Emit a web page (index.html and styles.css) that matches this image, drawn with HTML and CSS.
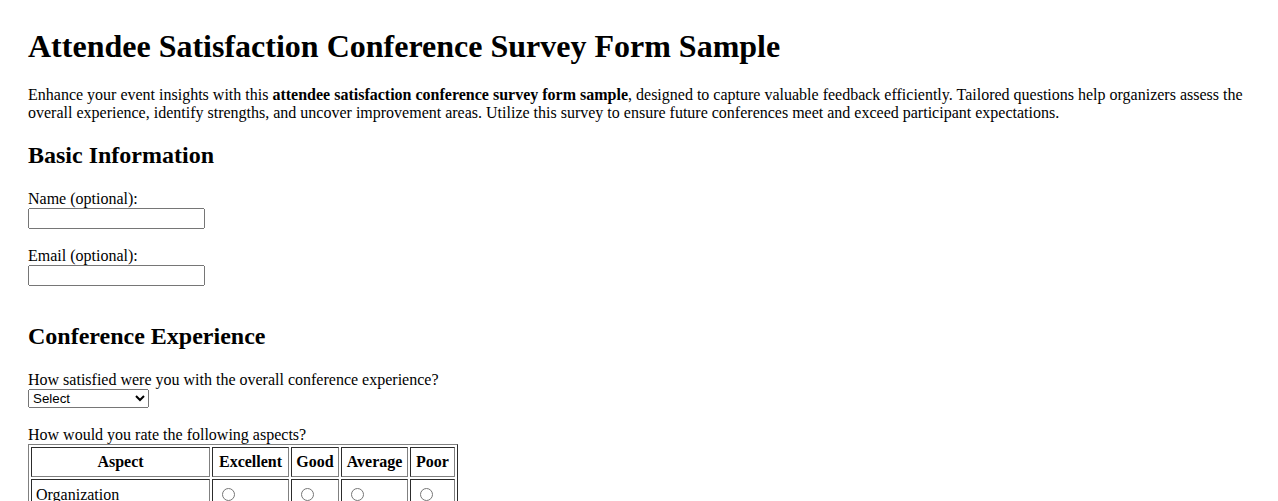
FILE: index.html
```html
<!DOCTYPE html>
<html lang="en">
<head>
<meta charset="utf-8">
<title>Attendee Satisfaction Conference Survey Form Sample</title>
<link rel="stylesheet" href="styles.css">
</head>
<body>
<div class="page">
  <h1 class="title">Attendee Satisfaction Conference Survey Form Sample</h1>
  <p class="intro">Enhance your event insights with this <strong>attendee satisfaction conference survey form sample</strong>, designed to capture valuable feedback efficiently. Tailored questions help organizers assess the overall experience, identify strengths, and uncover improvement areas. Utilize this survey to ensure future conferences meet and exceed participant expectations.</p>
  <form class="survey">
    <section class="section">
      <h2 class="section-title">Basic Information</h2>
      <p class="field"><label for="name">Name (optional):</label><br><input class="text-input" type="text" id="name" name="name"></p>
      <p class="field"><label for="email">Email (optional):</label><br><input class="text-input" type="email" id="email" name="email"></p>
    </section>
    <section class="section">
      <h2 class="section-title">Conference Experience</h2>
      <p class="field"><label for="overall">How satisfied were you with the overall conference experience?</label><br><select class="select-input" id="overall" name="overall">
          <option>Select</option>
          <option>Very Satisfied</option>
          <option>Satisfied</option>
          <option>Neutral</option>
          <option>Dissatisfied</option>
          <option>Very Dissatisfied</option>
        </select></p>
      <div class="field"><label>How would you rate the following aspects?</label><br>
        <table class="rating" border="1">
          <thead>
            <tr><th class="col-aspect">Aspect</th><th class="col-excellent">Excellent</th><th class="col-good">Good</th><th class="col-average">Average</th><th class="col-poor">Poor</th></tr>
          </thead>
          <tbody>
            <tr><td>Organization</td><td><input type="radio" name="org"></td><td><input type="radio" name="org"></td><td><input type="radio" name="org"></td><td><input type="radio" name="org"></td></tr>
            <tr><td>Speakers</td><td><input type="radio" name="spk"></td><td><input type="radio" name="spk"></td><td><input type="radio" name="spk"></td><td><input type="radio" name="spk"></td></tr>
            <tr><td>Networking Opportunities</td><td><input type="radio" name="net"></td><td><input type="radio" name="net"></td><td><input type="radio" name="net"></td><td><input type="radio" name="net"></td></tr>
            <tr><td>Venue and Facilities</td><td><input type="radio" name="ven"></td><td><input type="radio" name="ven"></td><td><input type="radio" name="ven"></td><td><input type="radio" name="ven"></td></tr>
          </tbody>
        </table>
      </div>
    </section>
  </form>
</div>
</body>
</html>
```
FILE: styles.css
```css
html, body {
  margin: 0;
  padding: 0;
  background: #ffffff;
}
body {
  font-family: "Liberation Serif", "Times New Roman", serif;
  font-size: 16px;
  color: #000000;
}
.page {
  padding: 28px;
}
.title {
  font-size: 32px;
  font-weight: bold;
  margin: 0 0 21.44px 0;
}
.intro {
  margin: 16px 0;
}
.section {
  display: flow-root;
  margin-top: 19.92px;
}
.section-title {
  font-size: 24px;
  font-weight: bold;
  margin: 0 0 20.92px 0;
}
.field {
  margin: 16px 0;
}
.field:last-child {
  margin-bottom: 15px;
}
.text-input,
.select-input {
  font-family: "Liberation Sans", Arial, sans-serif;
  font-size: 13.333px;
  margin-bottom: 2px;
}
.text-input {
  width: 177px;
  height: 21px;
  box-sizing: border-box;
}
.rating {
  border-collapse: separate;
  border-spacing: 2px;
}
.rating th,
.rating td {
  padding: 5px 4px;
  text-align: left;
}
.rating th {
  text-align: center;
}
.rating .col-aspect { width: 169px; }
.rating .col-excellent { width: 67px; }
.rating .col-good { width: 38px; }
.rating .col-average { width: 57px; }
.rating .col-poor { width: 35px; }
```
